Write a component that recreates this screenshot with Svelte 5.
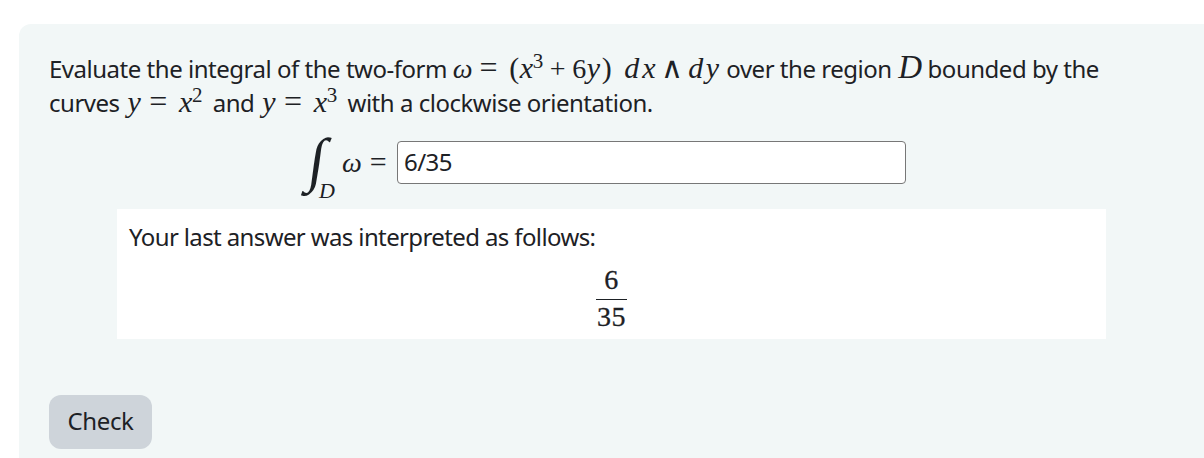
<script>
	let answer = '6/35';
</script>

<div class="panel">
	<p class="question">
		Evaluate the integral of the two-form <span class="m"><i class="w">ω</i><span class="rel">=</span><span class="paren">(</span><i>x</i><sup>3</sup><span class="bin">+</span>6<i>y</i><span class="paren">)</span><i class="d">dx</i><span class="wedge">∧</span><i class="d2">dy</i></span> over the region <span class="m big"><i>D</i></span> bounded by the<br />
		curves <span class="m l2"><i>y</i><span class="rel">=</span><i>x</i><sup>2</sup></span> and <span class="m l2"><i>y</i><span class="rel">=</span><i>x</i><sup>3</sup></span> with a clockwise orientation.
	</p>

	<div class="answer-row">
		<span class="integral">∫</span>
		<span class="sub">D</span>
		<span class="m lhs"><i class="w">ω</i><span class="rel small">=</span></span>
		<input type="text" bind:value={answer} />
	</div>

	<div class="feedback">
		<p>Your last answer was interpreted as follows:</p>
		<div class="frac">
			<span>6</span>
			<span class="den">35</span>
		</div>
	</div>

	<button>Check</button>
</div>

<style>
	:global(body) {
		margin: 0;
		background: #fff;
		overflow: hidden;
	}

	.panel {
		margin: 24px 0 0 19px;
		padding: 28px 0 0 30px;
		height: 434px;
		background: #f2f7f7;
		border-radius: 12px 0 0 0;
		font-family: "Noto Sans", sans-serif;
		font-size: 24px;
		letter-spacing: -0.48px;
		color: #1d2125;
		box-sizing: border-box;
	}

	.question {
		margin: 0;
		line-height: 34px;
		white-space: nowrap;
	}

	.m {
		font-family: "Liberation Serif", serif;
		font-size: 28px;
		line-height: 0;
		letter-spacing: 0.6px;
	}

	.m i {
		font-size: 30px;
		letter-spacing: 1.6px;
	}

	.m .w {
		font-size: 28px;
		letter-spacing: 0;
	}

	.m .d {
		margin-left: 12px;
		letter-spacing: 3px;
	}

	.m .d2 {
		letter-spacing: 2.5px;
		margin-right: -1px;
	}

	.m.l2 {
		margin: 0 4px 0 2px;
	}

	.m.big {
		margin: 0 -2px 0 1px;
	}

	.m.big i {
		font-size: 33px;
	}

	.m sup {
		font-size: 21px;
		line-height: 0;
		margin-left: -2px;
	}

	.rel {
		margin: 0 11px 0 7px;
		font-size: 32px;
	}

	.rel.small {
		margin: 0 8px;
	}

	.bin {
		margin: 0 6px;
	}

	.paren {
		font-size: 30px;
	}

	.wedge {
		font-size: 30px;
		margin: 0 5px 0 2px;
	}

	.answer-row {
		display: flex;
		align-items: center;
		height: 43px;
		margin: 21px 0 0 253px;
		position: relative;
	}

	.integral {
		font-family: "Liberation Serif", serif;
		font-size: 60px;
		line-height: 43px;
		width: 28px;
		margin-top: 2px;
		transform: translate(7px, -3px) skewX(-8deg);
	}

	.sub {
		position: absolute;
		left: 17px;
		top: 37px;
		font-family: "Liberation Serif", serif;
		font-style: italic;
		font-size: 22px;
	}

	.lhs {
		margin-left: 12px;
		width: 55px;
		white-space: nowrap;
		font-size: 26px;
	}

	.lhs .rel {
		font-size: 30px;
	}

	input {
		width: 509px;
		height: 43px;
		box-sizing: border-box;
		padding: 0 6px 2px;
		border: 1px solid #777;
		border-radius: 4px;
		background: #fff;
		font: inherit;
		letter-spacing: -0.55px;
		color: #1d2125;
	}

	.feedback {
		width: 989px;
		height: 130px;
		margin: 25px 0 0 68px;
		padding: 11px 12px;
		box-sizing: border-box;
		background: #fff;
		letter-spacing: -0.62px;
	}

	.feedback p {
		margin: 0;
		line-height: 34px;
	}

	.frac {
		display: flex;
		flex-direction: column;
		align-items: center;
		width: 31px;
		margin: 6px auto 0;
		font-family: "Liberation Serif", serif;
		font-size: 28px;
		letter-spacing: 0.5px;
		line-height: 39px;
		-webkit-text-stroke: 0.3px #1d2125;
	}

	.frac .den {
		width: 100%;
		text-align: center;
		border-top: 1px solid #1d2125;
		line-height: 33px;
	}

	button {
		display: block;
		width: 103px;
		height: 54px;
		margin-top: 56px;
		padding: 0 0 3px;
		border: none;
		border-radius: 12px;
		background: #ced4da;
		font: inherit;
		letter-spacing: -0.4px;
		color: #1d2125;
	}
</style>
